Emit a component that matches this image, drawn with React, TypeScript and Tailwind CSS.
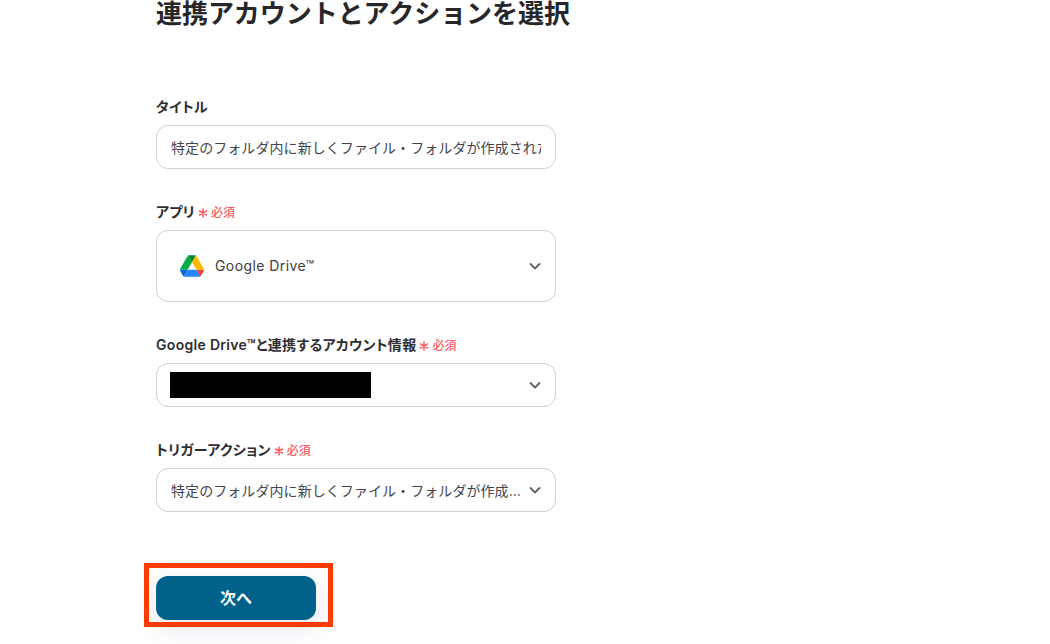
import React from "react";

const font = { fontFamily: 'Inter, "Noto Sans CJK JP", sans-serif' };

function Chevron() {
  return (
    <svg width="14" height="14" viewBox="0 0 14 14" fill="none" className="shrink-0">
      <path d="M2.5 5 L7 9.5 L11.5 5" stroke="#5f6368" strokeWidth="1.8" strokeLinecap="round" strokeLinejoin="round" />
    </svg>
  );
}

function DriveLogo() {
  return (
    <svg width="24" height="22" viewBox="0 0 87.3 78">
      <path d="m6.6 66.85 3.85 6.65c.8 1.4 1.95 2.5 3.3 3.3l13.75-23.8h-27.5c0 1.55.4 3.1 1.2 4.5z" fill="#0066da" />
      <path d="m43.65 25-13.75-23.8c-1.35.8-2.5 1.9-3.3 3.3l-25.4 44a9.06 9.06 0 0 0 -1.2 4.5h27.5z" fill="#00ac47" />
      <path d="m73.55 76.8c1.35-.8 2.5-1.9 3.3-3.3l1.6-2.75 7.65-13.25c.8-1.4 1.2-2.95 1.2-4.5h-27.5l5.85 11.5z" fill="#ea4335" />
      <path d="m43.65 25 13.75-23.8c-1.35-.8-2.9-1.2-4.5-1.2h-18.5c-1.6 0-3.15.45-4.5 1.2z" fill="#00832d" />
      <path d="m59.8 53h-32.3l-13.75 23.8c1.35.8 2.9 1.2 4.5 1.2h50.8c1.6 0 3.15-.45 4.5-1.2z" fill="#2684fc" />
      <path d="m73.4 26.5-12.7-22c-.8-1.4-1.95-2.5-3.3-3.3l-13.75 23.8 16.15 28h27.45c0-1.55-.4-3.1-1.2-4.5z" fill="#ffba00" />
    </svg>
  );
}

function Label({ text, required }: { text: string; required?: boolean }) {
  return (
    <div className="flex items-center h-[18px] mb-[9px] text-[14px] font-semibold text-[#2d2d33] leading-[18px] tracking-[0.022em] [font-feature-settings:'palt']">
      <span>{text}</span>
      {required && (
        <span className="ml-[3px] flex items-center text-[12px] font-medium tracking-normal text-[#fa5a5f] pt-[1px] [font-feature-settings:normal]">
          <svg width="10" height="10" viewBox="0 0 10 10" className="mr-[3px]">
            <path d="M5 1 V9 M1.5 3 L8.5 7 M8.5 3 L1.5 7" stroke="#fa5a5f" strokeWidth="1.5" strokeLinecap="round" />
          </svg>
          必須
        </span>
      )}
    </div>
  );
}

const box = "w-[400px] bg-white border border-[#cfd0d8] rounded-[12px] flex items-center";

export default function App() {
  return (
    <div className="w-[1050px] h-[644px] overflow-hidden bg-white pl-[156px]" style={font}>
      <h1 className="mt-[-6px] h-[40px] text-[26px] leading-[40px] font-semibold text-[#27272b] tracking-[-0.002em] whitespace-nowrap">
        連携アカウントとアクションを選択
      </h1>

      <div className="mt-[64px]">
        <Label text="タイトル" />
        <div className={`${box} h-[44px] pl-[14px] pr-[14px]`}>
          <div className="w-full overflow-hidden whitespace-nowrap text-[14px] text-[#44444c] tracking-[0.005em]">
            特定のフォルダ内に新しくファイル・フォルダが作成されたら
          </div>
        </div>
      </div>

      <div className="mt-[34px]">
        <Label text="アプリ" required />
        <div className={`${box} h-[72px] pl-[23px] pr-[13px] pb-[1px]`}>
          <DriveLogo />
          <span className="ml-[11px] flex-1 text-[14px] text-[#3c3c44] tracking-[0.03em]">Google Drive™</span>
          <Chevron />
        </div>
      </div>

      <div className="mt-[34px]">
        <Label text="Google Drive™と連携するアカウント情報" required />
        <div className={`${box} h-[44px] pl-[13px] pr-[13px] justify-between`}>
          <div className="w-[201px] h-[26px] bg-black" />
          <Chevron />
        </div>
      </div>

      <div className="mt-[34px]">
        <Label text="トリガーアクション" required />
        <div className={`${box} h-[44px] pl-[14px] pr-[13px] gap-[6px]`}>
          <div className="flex-1 min-w-0 truncate text-[14px] text-[#44444c] tracking-[0.005em]">
            特定のフォルダ内に新しくファイル・フォルダが作成されたら
          </div>
          <Chevron />
        </div>
      </div>

      <div className="relative mt-[64px] w-[160px]">
        <button className="w-[160px] h-[44px] rounded-[12px] bg-[#00628a] text-white text-[16px] font-semibold shadow-[0_8px_24px_rgba(60,70,140,0.14)]">
          次へ
        </button>
        <div className="absolute left-[-12px] top-[-13px] w-[189px] h-[64px] border-[5px] border-[#ff3c00]" />
      </div>
    </div>
  );
}
